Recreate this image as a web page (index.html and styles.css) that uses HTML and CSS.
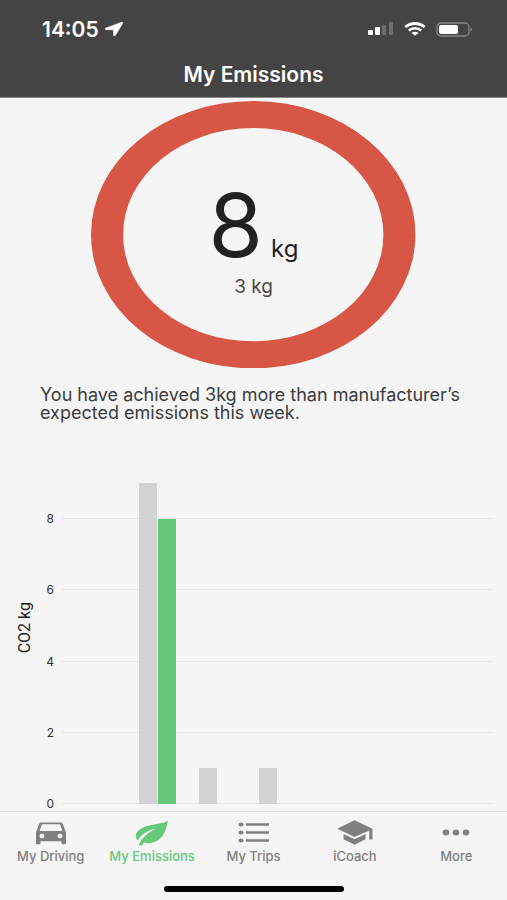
FILE: index.html
```html
<!DOCTYPE html>
<html lang="en">
<head>
    <meta charset="UTF-8">
    <meta name="viewport" content="width=device-width, initial-scale=1.0">
    <title>My Emissions</title>
    <link rel="stylesheet" href="styles.css">
</head>
<body>

    <header>
        <div class="status-bar">
            <div class="status-time">
                <span>14:05</span>
                <svg width="18" height="14" viewBox="0 0 18 14"><path d="M16.600.2.800 6c-1.100.4-1 1.700.2 1.700l7.400.1.1 5.200c0 1.200 1.500 1.300 2 .2L17.800 1.300c.4-.8-.3-1.400-1.200-1.100z" fill="#fff" stroke="#fff" stroke-width=".5"/></svg>
            </div>
            <div class="status-icons">
                <svg width="26" height="14" viewBox="0 0 26 14">
                    <rect x="0" y="8" width="5" height="5" rx="1" fill="#fff"/>
                    <rect x="7" y="5" width="5" height="8" rx="1" fill="#fff"/>
                    <rect x="14" y="3" width="4" height="10" rx="1" fill="#6e6e6e"/>
                    <rect x="21" y="0" width="4" height="13" rx="1" fill="#6e6e6e"/>
                </svg>
                <svg width="22" height="14" viewBox="0 0 22 14">
                    <path d="M1.300 5C7 .3 15 .3 20.700 5" fill="none" stroke="#fff" stroke-width="2.800"/>
                    <path d="M4.800 8.500c3.600-3 8.800-3 12.400 0" fill="none" stroke="#fff" stroke-width="2.500"/>
                    <path d="M7.500 11c2-1.700 5-1.700 7 0L11 13.800z" fill="#fff"/>
                </svg>
                <svg width="37" height="15" viewBox="0 0 37 15">
                    <rect x="1" y="1" width="32" height="13" rx="4" fill="none" stroke="#858585" stroke-width="1.300"/>
                    <rect x="3" y="3" width="19" height="9" rx="2" fill="#fff"/>
                    <path d="M34.500 5.500c2 .5 2 3.500 0 4z" fill="#858585"/>
                </svg>
            </div>
        </div>
        <h1>My Emissions</h1>
    </header>

    <main>
        <div class="gauge">
            <svg class="gauge-ring" viewBox="0 0 324 267">
                <path fill-rule="evenodd" fill="#d75645" d="M0 133.500a162 133.500 0 1 0 324 0a162 133.500 0 1 0-324 0zM32 133.500a130 106.500 0 1 0 260 0a130 106.500 0 1 0-260 0z"/>
            </svg>
            <div class="gauge-text">
                <div class="gauge-value">
                    <span class="number">8</span>
                    <span class="unit">kg</span>
                </div>
                <div class="gauge-diff">3 kg</div>
            </div>
        </div>

        <p class="summary">You have achieved 3kg more than manufacturer’s expected emissions this week.</p>

        <div class="chart">
            <div class="axis-title">CO2 kg</div>
            <div class="axis">
                <span></span>
                <span>8</span>
                <span>6</span>
                <span>4</span>
                <span>2</span>
                <span>0</span>
            </div>
            <div class="plot">
                <div class="lines"><i></i><i></i><i></i><i></i><i></i></div>
                <div class="bars">
                    <div class="day"></div>
                    <div class="day">
                        <div class="bar" style="height: 100%"></div>
                        <div class="bar green" style="height: 88.900%"></div>
                    </div>
                    <div class="day"><div class="bar" style="height: 11.100%"></div></div>
                    <div class="day"><div class="bar" style="height: 11.100%"></div></div>
                    <div class="day"></div>
                    <div class="day"></div>
                    <div class="day"></div>
                </div>
            </div>
        </div>
    </main>

    <nav>
        <div class="tabs">
            <a href="#driving">
                <svg width="30" height="24" viewBox="0 0 30 24"><path fill-rule="evenodd" d="M5.500 1.500h19c1.300 0 2 .5 2.400 1.600L30 11.500V22c0 .8-.5 1.200-1.200 1.200h-2c-.8 0-1.300-.4-1.300-1.200v-1.800h-21V22c0 .8-.5 1.200-1.300 1.200h-2C.5 23.200 0 22.800 0 22V11.500l3.100-8.400c.4-1.100 1.100-1.600 2.400-1.600zM6 3.200 3.500 10h23L24 3.200zM6 12.800a2.500 2.200 0 1 0 .01 4.400a2.500 2.200 0 1 0-.01-4.400zM24 12.800a2.500 2.200 0 1 0 .01 4.400a2.500 2.200 0 1 0-.01-4.400z"/></svg>
                <span>My Driving</span>
            </a>
            <a href="#emissions" class="active">
                <svg width="34" height="26" viewBox="0 0 34 26"><path d="M33 .5c-3 2.500-8 2.800-14 4C7.500 6.500.8 10.500.8 16.200c0 1.900.9 3.300 2 4.300C6.500 14.500 12 10.300 21 8.500 13 12.500 7.500 17 4 24.300c-.3.900.5 1.300 1.800 1.300 1 0 1.500-.2 1.900-.9l1.100-2.200c4 1.500 10.200.9 15.200-2.900C30.500 14.500 31 8 33 .5z"/></svg>
                <span>My Emissions</span>
            </a>
            <a href="#trips">
                <svg width="32" height="24" viewBox="0 0 32 24"><ellipse cx="3" cy="3.500" rx="2.500" ry="2.100"/><ellipse cx="3" cy="11.500" rx="2.500" ry="2.100"/><ellipse cx="3" cy="19.500" rx="2.500" ry="2.100"/><path d="M8 2.200h23v2.600H8zM8 10.200h23v2.600H8zM8 18.200h23v2.600H8z"/></svg>
                <span>My Trips</span>
            </a>
            <a href="#icoach">
                <svg width="36" height="26" viewBox="0 0 36 26"><path d="M17.500.300 35.500 8.800V19.500h-3.200v-9L17.500 17 .2 8.800zM6.500 14l11 5.200 11-5.200v5.200l-11 5.600-11-5.600z"/></svg>
                <span>iCoach</span>
            </a>
            <a href="#more">
                <svg width="28" height="24" viewBox="0 0 28 24"><ellipse cx="4" cy="11.500" rx="3.300" ry="2.900"/><ellipse cx="14" cy="11.500" rx="3.300" ry="2.900"/><ellipse cx="24" cy="11.500" rx="3.300" ry="2.900"/></svg>
                <span>More</span>
            </a>
        </div>
        <div class="home-bar"></div>
    </nav>

</body>
</html>
```
FILE: styles.css
```css
* {
    box-sizing: border-box;
}

body {
    font-family: Inter, "Liberation Sans", sans-serif;
    background-color: #f5f5f5;
    color: #1f2123;
    margin: 0;
    min-height: 100vh;
    display: flex;
    flex-direction: column;
}

svg {
    display: block;
}

header {
    background-color: #444;
    color: #fff;
    padding-top: 16px;
    border-bottom: 1px solid #8a8a8a;
}

.status-bar {
    display: flex;
    justify-content: space-between;
    align-items: center;
    height: 26px;
    padding: 0 34px 0 42px;
}

.status-time,
.status-icons {
    display: flex;
    align-items: center;
}

.status-time {
    gap: 6px;
    font-size: 21px;
    font-weight: 600;
}

.status-icons {
    gap: 10px;
}

h1 {
    margin: 21px 0 10px;
    font-size: 21px;
    line-height: 24px;
    font-weight: 600;
    text-align: center;
}

main {
    flex: 1;
    display: flex;
    flex-direction: column;
}

.gauge {
    display: grid;
    width: 64%;
    margin: 3px auto 0;
}

.gauge-ring,
.gauge-text {
    grid-area: 1 / 1;
    width: 100%;
}

.gauge-text {
    display: flex;
    flex-direction: column;
    justify-content: center;
    align-items: center;
    padding-top: 8px;
}

.gauge-value {
    display: flex;
    align-items: baseline;
    gap: 8px;
}

.number {
    font-size: 88px;
    line-height: 88px;
}

.unit {
    font-size: 24px;
    line-height: 24px;
}

.gauge-diff {
    margin-top: 8px;
    font-size: 19px;
    line-height: 20px;
    color: #4a4a4a;
}

.summary {
    margin: 18px 32px 0 40px;
    font-size: 18px;
    line-height: 18px;
    color: #3a3c3e;
}

.chart {
    flex: 1;
    display: flex;
    min-height: 240px;
    margin-top: 61px;
    padding: 0 14px 7px 15px;
}

.axis-title {
    align-self: center;
    margin-bottom: 32px;
    writing-mode: vertical-rl;
    transform: rotate(180deg);
    font-family: Roboto, sans-serif;
    font-size: 16px;
    line-height: 20px;
}

.axis,
.lines {
    display: grid;
    grid-template-rows: 1fr 2fr 2fr 2fr 2fr;
}

.axis {
    grid-template-rows: 0 1fr 2fr 2fr 2fr 2fr;
    width: 19px;
    margin-right: 8px;
    font-size: 12px;
    line-height: 12px;
    text-align: right;
    color: #333;
}

.axis span {
    align-self: end;
    transform: translateY(50%);
}

.plot {
    flex: 1;
    display: grid;
}

.lines,
.bars {
    grid-area: 1 / 1;
}

.lines i {
    border-bottom: 1px solid #e5e5e5;
}

.bars {
    display: flex;
    padding: 0 6px;
}

.day {
    flex: 1;
    display: flex;
    align-items: flex-end;
    gap: 1px;
    padding: 0 11px;
}

.bar {
    width: 18px;
    flex-shrink: 0;
    background-color: #d2d2d2;
}

.bar.green {
    background-color: #65c97a;
}

nav {
    border-top: 1px solid #e0e0e0;
    padding: 8px 0;
}

.tabs {
    display: flex;
}

.tabs a {
    flex: 1;
    display: flex;
    flex-direction: column;
    align-items: center;
    font-size: 13px;
    line-height: 16px;
    font-weight: 500;
    text-decoration: none;
    color: #808080;
}

.tabs svg {
    height: 26px;
    margin-bottom: 2px;
    fill: currentColor;
}

.tabs .active {
    color: #65c97a;
}

.home-bar {
    width: 180px;
    height: 6px;
    margin: 22px auto 0;
    border-radius: 3px;
    background-color: #000;
}
```
